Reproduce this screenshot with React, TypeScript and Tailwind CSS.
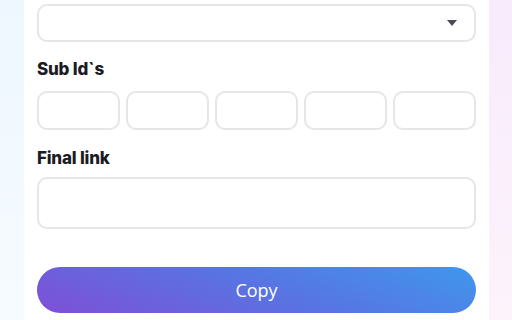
import React from "react";

export default function App() {
  return (
    <div className="w-[512px] h-[320px] overflow-hidden flex bg-[linear-gradient(90deg,#eef7ff_0%,#f9edfc_100%)]" style={{ fontFamily: "Inter, 'Noto Sans', sans-serif" }}>
      <div className="w-[24px] shrink-0 bg-[linear-gradient(180deg,#eef7ff_0%,#f6fbff_100%)]" />
      <div className="w-[465px] shrink-0 bg-white px-[13px] pt-[4px] flex flex-col">
        <div className="h-[38px] border-2 border-[#e6e6e9] rounded-[10px] flex items-center justify-end pr-[17px]">
          <svg width="10" height="6" viewBox="0 0 10 6">
            <path d="M0 0H10L5 6Z" fill="#4b4a5c" />
          </svg>
        </div>
        <div className="mt-[17px] text-[17px] leading-[20px] font-extrabold text-[#1b1b24] tracking-[-0.2px]">Sub Id`s</div>
        <div className="mt-[12px] flex gap-[6px]">
          {[0, 1, 2, 3, 4].map((i) => (
            <div key={i} className="w-[83px] h-[39px] border-2 border-[#e6e6e9] rounded-[10px]" />
          ))}
        </div>
        <div className="mt-[18px] text-[17px] leading-[20px] font-extrabold text-[#1b1b24] tracking-[-0.2px]">Final link</div>
        <div className="mt-[9px] h-[52px] border-2 border-[#e6e6e9] rounded-[10px]" />
        <button className="mt-[38px] h-[46px] w-full rounded-full bg-[linear-gradient(20deg,#7f4fd6_0%,#5a72e2_50%,#3f97ec_100%)] text-white text-[18px] flex items-center justify-center" style={{ fontFamily: "'Open Sans', sans-serif" }}>
          Copy
        </button>
      </div>
      <div className="flex-1 bg-[linear-gradient(180deg,#f8ebfc_0%,#fcf3fb_100%)]" />
    </div>
  );
}
